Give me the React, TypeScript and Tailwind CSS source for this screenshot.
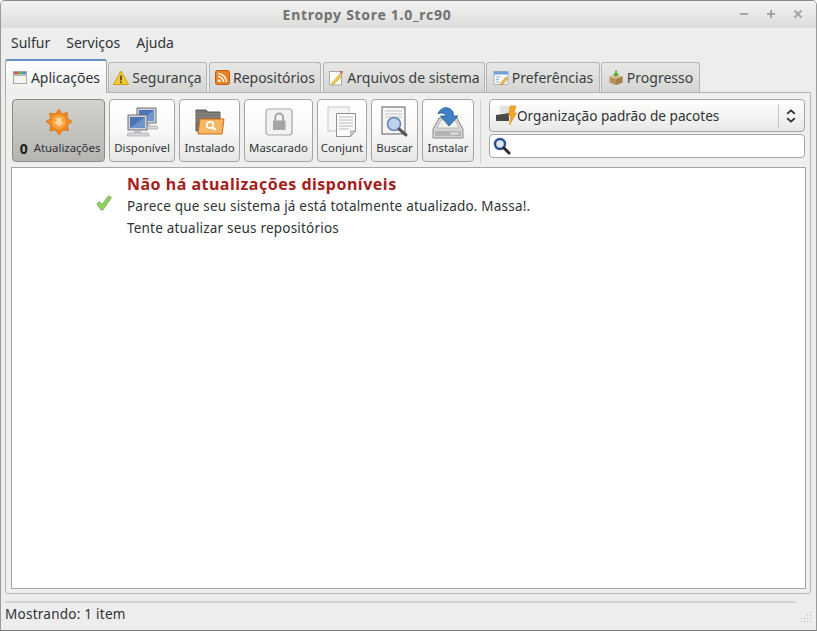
import type { ReactNode } from "react"

const font = "font-['Noto_Sans','Open_Sans',sans-serif]"

function CalendarIcon() {
  return (
    <svg width="16" height="16" viewBox="0 0 16 16">
      <rect x="1.5" y="2.5" width="13" height="12" fill="#f4f4f2" stroke="#a8a8a4" />
      <rect x="2" y="3" width="4" height="2.5" fill="#d9534f" />
      <rect x="6" y="3" width="4" height="2.5" fill="#6fae3f" />
      <rect x="10" y="3" width="4" height="2.5" fill="#5b8fcf" />
      <rect x="2" y="5.5" width="12" height="1.5" fill="#b8b8b4" />
    </svg>
  )
}

function WarningIcon() {
  return (
    <svg width="16" height="16" viewBox="0 0 16 16">
      <path d="M8 1 L15.5 14.5 H0.5 Z" fill="#f5c933" stroke="#c9a21a" strokeLinejoin="round" />
      <rect x="7.2" y="5.5" width="1.6" height="5" fill="#3a3a2a" />
      <rect x="7.2" y="11.5" width="1.6" height="1.6" fill="#3a3a2a" />
    </svg>
  )
}

function RssIcon() {
  return (
    <svg width="15" height="15" viewBox="0 0 15 15">
      <rect x="0.5" y="0.5" width="14" height="14" rx="2" fill="#ee8220" stroke="#b85f14" />
      <circle cx="4.2" cy="10.8" r="1.4" fill="#fff" />
      <path d="M3 6.6 A5.4 5.4 0 0 1 8.4 12 M3 3.6 A8.4 8.4 0 0 1 11.4 12" fill="none" stroke="#fff" strokeWidth="1.5" />
    </svg>
  )
}

function NoteIcon() {
  return (
    <svg width="16" height="16" viewBox="0 0 16 16">
      <rect x="1.5" y="1.5" width="12" height="13.5" fill="#fbfbf8" stroke="#a9a9a5" />
      <path d="M4 13 L12 4 L14 6 L6 14 L3.5 14.5 Z" fill="#f2cd45" stroke="#b7932a" strokeWidth="0.6" />
      <rect x="12" y="1" width="2.5" height="2.5" fill="#d8574e" />
    </svg>
  )
}

function PrefsIcon() {
  return (
    <svg width="16" height="16" viewBox="0 0 16 16">
      <rect x="1" y="1.5" width="14" height="13" fill="#f5f7fa" stroke="#a9b4c2" />
      <rect x="1" y="1.5" width="14" height="3" fill="#6fa3d8" />
      <path d="M3 7 H7 M3 9.5 H6 M3 12 H6" stroke="#8fb0d5" strokeWidth="1.2" />
      <path d="M7 14 L13 7 L15 8.5 L9 15 Z" fill="#efb93a" stroke="#b8862a" strokeWidth="0.5" />
    </svg>
  )
}

function BoxIcon() {
  return (
    <svg width="16" height="16" viewBox="0 0 16 16">
      <path d="M1.5 6.5 L8 9 L14.5 6.5 V12.5 L8 15 L1.5 12.5 Z" fill="#b9925f" />
      <path d="M1.5 6.5 L8 4.5 L14.5 6.5 L8 9 Z" fill="#d8bb8b" />
      <path d="M8 9 V15 L14.5 12.5 V6.5 Z" fill="#a67f4d" />
      <path d="M8 0.5 V5.5 M5.8 3.6 L8 6 L10.2 3.6" fill="none" stroke="#5fae2f" strokeWidth="1.8" />
    </svg>
  )
}

function UpdateIcon() {
  return (
    <svg width="28" height="28" viewBox="0 0 28 28">
      <path
        d="M14 1 L17 6 L22.5 4.5 L22 10 L27 13.5 L22.5 17 L23.5 22.5 L18 22 L14 27 L10.5 22 L5 23 L5.5 17 L1 13.5 L5.5 10.5 L4.5 5 L10.5 6 Z"
        fill="#f08a1d"
        stroke="#d06a10"
        strokeWidth="0.7"
      />
      <circle cx="14" cy="14" r="7" fill="#f9a640" />
      <path d="M11.5 10 H16.5 V14 H19 L14 18.5 L9 14 H11.5 Z" fill="#fbd9a4" />
    </svg>
  )
}

function Monitor({ x, y }: { x: number; y: number }) {
  return (
    <g transform={`translate(${x} ${y})`}>
      <rect x="0" y="0" width="19" height="15" fill="#cfd2d6" stroke="#6e7278" />
      <rect x="2" y="2" width="15" height="11" fill="#4d74b5" />
      <path d="M2 13 L17 2 V13 Z" fill="#6f93cc" />
      <rect x="6" y="15" width="7" height="2.5" fill="#b5b7ba" />
      <path d="M0 18 H20 L21.5 21 H-1 Z" fill="#d8d9db" stroke="#9a9ca0" strokeWidth="0.6" />
    </g>
  )
}

function NetworkIcon() {
  return (
    <svg width="32" height="30" viewBox="0 0 32 30">
      <Monitor x={11} y={1} />
      <Monitor x={2} y={8} />
    </svg>
  )
}

function FolderIcon() {
  return (
    <svg width="30" height="26" viewBox="0 0 30 26">
      <path d="M1 1 H11 L13 3 H25 V22 H1 Z" fill="#77756f" stroke="#5f5d58" />
      <path d="M1 5 H25 M1 8 H25 M1 11 H25" stroke="#94928c" strokeWidth="0.8" />
      <path d="M5 10 H29 L27 25 H3 Z" fill="#f8b765" stroke="#cf6a12" />
      <circle cx="15" cy="16" r="3.2" fill="none" stroke="#fff" strokeWidth="1.7" />
      <path d="M17.5 18.5 L21 21" stroke="#fff" strokeWidth="2" />
    </svg>
  )
}

function LockIcon() {
  return (
    <svg width="28" height="28" viewBox="0 0 28 28">
      <rect x="1" y="1" width="26" height="26" rx="3" fill="#f2f2f1" stroke="#a5a5a3" strokeWidth="1.2" />
      <rect x="8" y="12.5" width="12.5" height="9.5" fill="#a5a5a5" />
      <path d="M10.3 13 V9.5 A3.9 3.9 0 0 1 18.1 9.5 V13" fill="none" stroke="#a5a5a5" strokeWidth="2" />
    </svg>
  )
}

function PagesIcon() {
  return (
    <svg width="30" height="32" viewBox="0 0 30 32">
      <rect x="1" y="1" width="21" height="24" fill="#f6f6f6" stroke="#c8c8c8" />
      <path d="M9.5 7.5 H28.5 V25 L23.5 30.5 H9.5 Z" fill="#fafafa" stroke="#8f8f8f" />
      <path d="M23.5 30.5 V25 H28.5 Z" fill="#d0d0d0" stroke="#8f8f8f" strokeWidth="0.6" />
      <path d="M12 11 H26 M12 14 H26 M12 17 H26 M12 20 H26 M12 23 H22" stroke="#b8b8b8" />
    </svg>
  )
}

function SearchDocIcon() {
  return (
    <svg width="30" height="32" viewBox="0 0 30 32">
      <rect x="2" y="1" width="23" height="27" fill="#f6f6f4" stroke="#5a5a5a" />
      <path d="M5 5 H22 M5 8 H22 M5 11 H22" stroke="#c4c4c4" />
      <circle cx="14" cy="18" r="6.5" fill="#bcd2ec" stroke="#6b86ad" strokeWidth="1.6" />
      <path d="M19 23 L26 29" stroke="#555" strokeWidth="3" strokeLinecap="round" />
    </svg>
  )
}

function InstallIcon() {
  return (
    <svg width="32" height="34" viewBox="0 0 32 34">
      <path d="M7 13 H25 L31 24 V33 H1 V24 Z" fill="#d4d5d3" stroke="#8a8b89" />
      <path d="M9 15 H23 L27 23 H5 Z" fill="#f0f0ee" stroke="#a3a4a2" strokeWidth="0.6" />
      <rect x="3" y="26" width="26" height="5" fill="#b3b4b2" />
      <path d="M18 28.5 H27 M19 27 V30 M21 27 V30 M23 27 V30 M25 27 V30" stroke="#eee" strokeWidth="0.7" />
      <path
        d="M6 9 C8 2 17 0 21 7 L21.5 11 H26 L17 21 L8.5 11 H14 C13.5 8 9 7 6 9 Z"
        fill="#3f7fc4"
        stroke="#23558f"
        strokeWidth="0.8"
      />
    </svg>
  )
}

function SortIcon() {
  return (
    <svg width="18" height="18" viewBox="0 0 24 24">
      <path d="M7 9 L12 4.5 L17 9" fill="none" stroke="#2e3436" strokeWidth="2.4" />
      <path d="M7 15 L12 19.5 L17 15" fill="none" stroke="#2e3436" strokeWidth="2.4" />
    </svg>
  )
}

function ThemeIcon() {
  return (
    <svg width="22" height="22" viewBox="0 0 22 22">
      <rect x="5" y="1" width="9" height="7" fill="#e3e3e3" />
      <path d="M1 10 L14 8 V16 L1 16 Z" fill="#4a4a48" />
      <rect x="4" y="16" width="10" height="5" fill="#ededeb" />
      <path d="M15 1 H21 L19 8 H21.5 L14.5 20 L16 11 H13.5 Z" fill="#f2a623" stroke="#cd7f10" strokeWidth="0.5" />
    </svg>
  )
}

function MagnifierIcon() {
  return (
    <svg width="18" height="18" viewBox="0 0 18 18">
      <circle cx="7" cy="7" r="5" fill="#dfe6f3" stroke="#2d4d96" strokeWidth="2.4" />
      <path d="M10.8 10.8 L16 16" stroke="#2b2b2b" strokeWidth="3" strokeLinecap="round" />
    </svg>
  )
}

function CheckIcon() {
  return (
    <svg width="16" height="16" viewBox="0 0 16 16">
      <path d="M0.8 9 L3.5 6.5 L6 9.5 L12.5 0.8 L15.5 2.6 L7 15 L5 15 Z" fill="#8fd35f" stroke="#7da96a" strokeWidth="0.8" />
    </svg>
  )
}

function Tab({ icon, label, active, className }: { icon: ReactNode; label: string; active?: boolean; className: string }) {
  return (
    <div
      className={`flex items-center justify-center gap-[3px] rounded-t-[3px] border border-b-0 text-[14px] ${className} ${
        active
          ? "z-10 -mb-px h-[34px] border-[#a8a8a6] border-t-[#5f8fc4] border-t-2 bg-gradient-to-b from-white to-[#ededed] text-[#2e3436]"
          : "h-[30px] border-[#b4b4b2] bg-gradient-to-b from-[#e8e8e6] to-[#d5d5d3] text-[#3a3f41]"
      }`}
    >
      {icon}
      <span>{label}</span>
    </div>
  )
}

function ToolButton({ icon, label, className, active }: { icon: ReactNode; label: ReactNode; className: string; active?: boolean }) {
  return (
    <div
      className={`flex h-[63px] flex-col items-center rounded-[4px] border text-[11.4px] text-[#2e3436] ${className} ${
        active
          ? "border-[#8b8b89] bg-gradient-to-b from-[#d4d3d0] to-[#b5b4b1]"
          : "border-[#a5a5a3] bg-gradient-to-b from-white via-[#f9f9f8] to-[#e6e6e4]"
      }`}
    >
      <div className="flex h-[38px] items-center justify-center pt-[5px]">{icon}</div>
      <div className="flex h-[20px] items-center whitespace-nowrap">{label}</div>
    </div>
  )
}

export default function App() {
  return (
    <div className={`flex h-[631px] w-[817px] flex-col overflow-hidden rounded-t-[5px] border border-t-[#8a8a88] border-x-[#9a9a98] border-b-[#777] bg-[#ededed] ${font}`}>
      {/* Title bar */}
      <div className="relative flex h-[27px] shrink-0 items-center justify-center bg-gradient-to-b from-[#f3f3f2] to-[#dcdcda] pr-[83px]">
        <span className="text-[14px] font-bold tracking-[0.7px] text-[#707272]">Entropy Store 1.0_rc90</span>
        <div className="absolute right-[13px] top-[8px] flex items-center gap-[17px] text-[#a3a5a5]">
          <svg width="10" height="10" viewBox="0 0 10 10"><path d="M1 5 H9" stroke="currentColor" strokeWidth="2" /></svg>
          <svg width="10" height="10" viewBox="0 0 10 10"><path d="M1 5 H9 M5 1 V9" stroke="currentColor" strokeWidth="2" /></svg>
          <svg width="10" height="10" viewBox="0 0 10 10"><path d="M1.5 1.5 L8.5 8.5 M8.5 1.5 L1.5 8.5" stroke="currentColor" strokeWidth="2" /></svg>
        </div>
      </div>

      {/* Menu */}
      <div className="flex h-[31px] shrink-0 items-center gap-[16px] px-[10px] pb-[2px] text-[14px] text-[#2e3436]">
        <span>Sulfur</span>
        <span>Serviços</span>
        <span>Ajuda</span>
      </div>

      {/* Tabs */}
      <div className="flex h-[33px] shrink-0 items-end px-[4px]">
        <Tab active icon={<CalendarIcon />} label="Aplicações" className="mr-px w-[102px]" />
        <Tab icon={<WarningIcon />} label="Segurança" className="mr-[2px] w-[99px]" />
        <Tab icon={<RssIcon />} label="Repositórios" className="mr-[2px] w-[112px]" />
        <Tab icon={<NoteIcon />} label="Arquivos de sistema" className="mr-px w-[162px]" />
        <Tab icon={<PrefsIcon />} label="Preferências" className="mr-px w-[114px]" />
        <Tab icon={<BoxIcon />} label="Progresso" className="w-[99px]" />
      </div>

      {/* Notebook */}
      <div className="ml-[4px] mr-[5px] flex h-[502px] flex-col rounded-b-[3px] border border-[#b4b4b2] bg-[#efefee] px-[5px] pb-[2px] pt-[6px]">
        <div className="ml-px flex h-[68px] shrink-0">
          <div className="flex gap-[4px]">
            <ToolButton
              active
              icon={<UpdateIcon />}
              label={
                <>
                  <span className="ml-[3px] mr-[6px] text-[14px] font-bold text-[#1c1c1c]">0</span>Atualizações
                </>
              }
              className="w-[93px]"
            />
            <ToolButton icon={<NetworkIcon />} label="Disponível" className="w-[66px]" />
            <ToolButton icon={<FolderIcon />} label="Instalado" className="w-[61px]" />
            <ToolButton icon={<LockIcon />} label="Mascarado" className="w-[69px]" />
            <ToolButton icon={<PagesIcon />} label="Conjunt" className="w-[50px]" />
            <ToolButton icon={<SearchDocIcon />} label="Buscar" className="w-[47px]" />
            <ToolButton icon={<InstallIcon />} label="Instalar" className="w-[52px]" />
          </div>
          <div className="ml-[6px] mr-[8px] h-[64px] w-px bg-[#d0d0ce]" />
          <div className="flex w-[316px] flex-col gap-[2px]">
            <div className="flex h-[33px] items-center rounded-[4px] border border-[#a5a5a3] bg-gradient-to-b from-white to-[#e8e8e6] pl-[5px] text-[13.6px] text-[#2e3436]">
              <ThemeIcon />
              <span className="flex-1 pt-px">Organização padrão de pacotes</span>
              <div className="mr-[3px] h-[24px] w-px bg-[#c4c4c2]" />
              <SortIcon />
              <span className="w-[4px]" />
            </div>
            <div className="flex h-[24px] items-center rounded-[4px] border border-[#a5a5a3] bg-white pl-[3px]">
              <MagnifierIcon />
            </div>
          </div>
        </div>

        {/* Message area */}
        <div className="flex h-[422px] w-[795px] border border-[#a5a5a3] bg-white">
          <div className="flex w-[115px] shrink-0 justify-end pr-[15px] pt-[27px]">
            <CheckIcon />
          </div>
          <div className="pt-[5px] text-[13.5px] leading-[22px] tracking-[0.2px] text-[#2e3436]">
            <div className="text-[16px] font-bold leading-[22px] tracking-[0.5px] text-[#a51d1d]">Não há atualizações disponíveis</div>
            <div>Parece que seu sistema já está totalmente atualizado. Massa!.</div>
            <div>Tente atualizar seus repositórios</div>
          </div>
        </div>
      </div>

      {/* Status bar */}
      <div className="relative flex-1">
        <div className="ml-[4px] mt-[7px] h-[2px] w-[791px] bg-[#d2d2d0]" />
        <div className="pl-[4px] pt-px text-[13.5px] tracking-[0.25px] text-[#2e3436]">Mostrando: 1 item</div>
        <svg className="absolute bottom-[6px] right-[3px]" width="12" height="12" viewBox="0 0 12 12" fill="#bdbdbb">
          <rect x="9" y="0" width="1" height="1" />
          <rect x="9" y="3" width="1" height="1" />
          <rect x="6" y="3" width="1" height="1" />
          <rect x="9" y="6" width="1" height="1" />
          <rect x="6" y="6" width="1" height="1" />
          <rect x="3" y="6" width="1" height="1" />
          <rect x="9" y="9" width="1" height="1" />
          <rect x="6" y="9" width="1" height="1" />
          <rect x="3" y="9" width="1" height="1" />
          <rect x="0" y="9" width="1" height="1" />
        </svg>
      </div>
    </div>
  )
}
